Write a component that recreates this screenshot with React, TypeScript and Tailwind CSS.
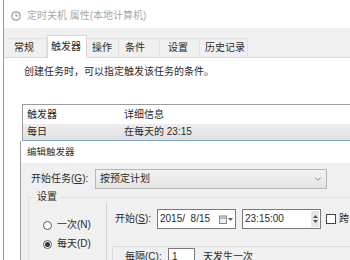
import { ChevronDown } from "lucide-react";

const tabs = [
  { label: "常规", w: "w-[38px]", pl: "pl-[5px]" },
  { label: "触发器", w: "w-[40px]", pl: "pl-[3px]", active: true },
  { label: "操作", w: "w-[32px]", pl: "pl-[5px]" },
  { label: "条件", w: "w-[41px]", pl: "pl-[6px]" },
  { label: "设置", w: "w-[40px]", pl: "pl-[8px]" },
  { label: "历史记录", w: "w-[48px]", pl: "pl-[5px]" },
];

function ClockIcon() {
  return (
    <svg width="10" height="10" viewBox="0 0 10 10">
      <circle cx="5" cy="5" r="4.2" fill="none" stroke="#9a9a9a" strokeWidth="1.2" />
      <path d="M5 2.6V5h1.9" fill="none" stroke="#9a9a9a" strokeWidth="1" />
    </svg>
  );
}

function Radio({ label, checked }: { label: string; checked?: boolean }) {
  return (
    <div className="flex h-[12px] items-center gap-[5px]">
      <span className="flex h-[9px] w-[9px] items-center justify-center rounded-full border border-[#5a5a5a] bg-white">
        {checked && <span className="h-[5px] w-[5px] rounded-full bg-[#333]" />}
      </span>
      <span>{label}</span>
    </div>
  );
}

export default function App() {
  return (
    <div className="h-[260px] w-[350px] overflow-hidden bg-white font-['Liberation_Sans','Noto_Sans_CJK_SC',sans-serif] text-[10px] leading-[12px] text-[#2a2a2a]">
      <div className="ml-[3px] flex h-full flex-col border-l border-[#9a9a9a]">
        {/* title bar */}
        <div className="flex h-[28px] shrink-0 items-center gap-[6px] pl-[7px] pt-[4px] text-[#a8a8a8]">
          <ClockIcon />
          <span>定时关机 属性(本地计算机)</span>
        </div>

        {/* tabs */}
        <div className="flex h-[29px] shrink-0 items-end bg-[#f0f0f0] pl-[5px]">
          {tabs.map((t) =>
            t.active ? (
              <div
                key={t.label}
                className={`relative z-10 -mb-px flex h-[23px] items-center border border-b-0 border-[#d9d9d9] bg-white ${t.w} ${t.pl}`}
              >
                {t.label}
              </div>
            ) : (
              <div
                key={t.label}
                className={`flex h-[19px] items-center border-t border-r border-[#e0e0e0] ${t.w} ${t.pl}`}
              >
                {t.label}
              </div>
            )
          )}
        </div>

        {/* panel */}
        <div className="flex-1 border-t border-[#d9d9d9] bg-white">
          <div className="pl-[20px] pt-[8px]">创建任务时，可以指定触发该任务的条件。</div>

          <div className="ml-[18px] mt-[26px] w-[340px] border-t border-l border-[#9c9c9c]">
            <div className="flex h-[19px] items-center">
              <div className="w-[96px] pl-[4px]">触发器</div>
              <div className="pl-[5px]">详细信息</div>
            </div>
            <div className="flex h-[17px] items-center border-b border-[#7aa7d1] bg-gradient-to-b from-[#eeeeee] to-[#e0e0e0]">
              <div className="w-[96px] pl-[4px]">每日</div>
              <div className="pl-[5px]">在每天的 23:15</div>
            </div>
          </div>

          {/* edit trigger dialog */}
          <div className="ml-[16px] w-[340px] border-l border-[#9c9c9c]">
            <div className="flex h-[22px] items-center bg-white pl-[6px] text-[9.5px] text-[#333]">编辑触发器</div>
            <div className="h-[120px] bg-[#f0f0f0] pt-[6px]">
              <div className="flex items-center pl-[10px]">
                <span className="w-[64px]">开始任务(<span className="underline">G</span>):</span>
                <div className="flex h-[20px] w-[232px] items-center justify-between border border-[#b5b5b5] bg-gradient-to-b from-[#f2f2f2] to-[#e4e4e4] pl-[4px] pr-[3px]">
                  <span>按预定计划</span>
                  <ChevronDown size={10} color="#777" />
                </div>
              </div>

              <fieldset className="ml-[7px] mt-[2px] border border-[#e2e2e2]">
                <legend className="ml-[6px] px-[2px]">设置</legend>
                <div className="flex">
                  <div className="flex w-[78px] flex-col gap-[7px] border-r border-[#d0d0d0] pl-[14px] pt-[16px]">
                    <Radio label="一次(N)" />
                    <Radio label="每天(D)" checked />
                  </div>
                  <div className="flex-1 pl-[8px] pt-[6px]">
                    <div className="flex items-center">
                      <span className="w-[42px]">开始(<span className="underline">S</span>):</span>
                      <div className="flex h-[20px] w-[79px] items-center justify-between border border-[#7a7a7a] bg-white pl-[2px] pr-[2px]">
                        <span>2015/&nbsp;&nbsp;8/15</span>
                        <span className="flex items-center gap-[1px] text-[#777]">
                          <svg width="8" height="9" viewBox="0 0 8 9">
                            <rect x="0.5" y="1" width="7" height="7.5" fill="#eee" stroke="#888" />
                            <path d="M1 3h6" stroke="#888" />
                          </svg>
                          <svg width="5" height="3" viewBox="0 0 5 3">
                            <path d="M0 0h5L2.5 3z" fill="#555" />
                          </svg>
                        </span>
                      </div>
                      <div className="ml-[6px] flex h-[20px] w-[79px] items-center justify-between border border-[#7a7a7a] bg-white pl-[2px] pr-[1px]">
                        <span>23:15:00</span>
                        <span className="flex h-[16px] w-[8px] flex-col items-center justify-center gap-[2px] bg-[#e6e6e6]">
                          <svg width="5" height="3" viewBox="0 0 5 3">
                            <path d="M0 3h5L2.5 0z" fill="#555" />
                          </svg>
                          <svg width="5" height="3" viewBox="0 0 5 3">
                            <path d="M0 0h5L2.5 3z" fill="#555" />
                          </svg>
                        </span>
                      </div>
                      <span className="ml-[5px] h-[10px] w-[10px] shrink-0 border border-[#444] bg-white" />
                      <span className="ml-[3px] whitespace-nowrap">跨</span>
                    </div>
                    <div className="ml-[-3px] mt-[17px] flex items-center border border-[#dcdcdc] pl-[12px] pt-[1px]">
                      <span className="w-[43px]">每隔(<span className="underline">C</span>):</span>
                      <div className="flex h-[18px] w-[27px] items-center border border-[#7a7a7a] bg-white pl-[3px]">1</div>
                      <span className="ml-[8px]">天发生一次</span>
                    </div>
                  </div>
                </div>
              </fieldset>
            </div>
          </div>
        </div>
      </div>
    </div>
  );
}
